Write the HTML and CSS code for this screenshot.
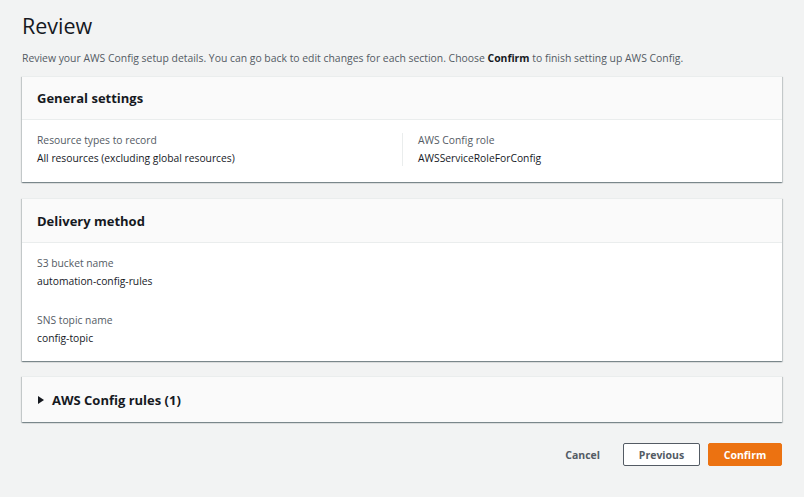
FILE: index.html
```html
<!DOCTYPE html>
<html>
<head>
<meta charset="utf-8">
<link rel="stylesheet" href="styles.css">
</head>
<body>
<div class="page">
  <h1 class="title">Review</h1>
  <p class="desc">Review your AWS Config setup details. You can go back to edit changes for each section. Choose <b>Confirm</b> to finish setting up AWS Config.</p>

  <section class="card">
    <div class="card-head"><h2>General settings</h2></div>
    <div class="card-body cols">
      <div class="col">
        <div class="label">Resource types to record</div>
        <div class="value">All resources (excluding global resources)</div>
      </div>
      <div class="col col-div">
        <div class="label">AWS Config role</div>
        <div class="value">AWSServiceRoleForConfig</div>
      </div>
    </div>
  </section>

  <section class="card card-delivery">
    <div class="card-head tall"><h2>Delivery method</h2></div>
    <div class="card-body stack">
      <div class="field">
        <div class="label">S3 bucket name</div>
        <div class="value">automation-config-rules</div>
      </div>
      <div class="field">
        <div class="label">SNS topic name</div>
        <div class="value">config-topic</div>
      </div>
    </div>
  </section>

  <section class="card card-rules">
    <div class="card-head collapsed"><span class="caret"></span><h2>AWS Config rules (1)</h2></div>
  </section>

  <div class="actions">
    <button class="btn-link">Cancel</button>
    <button class="btn btn-normal">Previous</button>
    <button class="btn btn-primary">Confirm</button>
  </div>
</div>
</body>
</html>
```
FILE: styles.css
```css
html, body {
  margin: 0;
  padding: 0;
  background: #f2f3f3;
}
body {
  font-family: "Open Sans", "Liberation Sans", sans-serif;
  color: #16191f;
}
.page {
  padding: 10px 22px 0 22px;
  width: 760px;
}
.title {
  margin: 0;
  font-size: 21.5px;
  font-weight: 400;
  line-height: 32px;
  color: #16191f;
}
.desc {
  margin: 8px 0 0 0;
  font-size: 10.4px;
  line-height: 16px;
  color: #545b64;
}
.desc b {
  color: #16191f;
  font-weight: 700;
}
.card {
  margin-top: 10px;
  background: #fff;
  box-shadow: 0 1px 1px 0 rgba(0,28,36,.3), 1px 1px 1px 0 rgba(0,28,36,.15), -1px 1px 1px 0 rgba(0,28,36,.15);
  border-top: 1px solid #eaeded;
}
.card-delivery {
  margin-top: 16px;
}
.card-rules {
  margin-top: 15px;
}
.card-head {
  background: #fafafa;
  height: 42px;
  display: flex;
  align-items: center;
  padding: 0 15px;
  border-bottom: 1px solid #eaeded;
}
.card-head.tall {
  height: 43px;
}
.card-head.collapsed {
  border-bottom: none;
  height: 45px;
}
.card-head h2 {
  margin: 0;
  font-size: 13px;
  font-weight: 700;
  color: #16191f;
}
.caret {
  width: 0;
  height: 0;
  border-top: 4px solid transparent;
  border-bottom: 4px solid transparent;
  border-left: 6px solid #16191f;
  margin-right: 8px;
  margin-left: 1px;
}
.card-body {
  padding: 13px 15px 16px 15px;
}
.cols {
  display: grid;
  grid-template-columns: 1fr 1fr;
  column-gap: 0;
}
.col-div {
  border-left: 1px solid #eaeded;
  padding-left: 15px;
}
.stack {
  display: flex;
  flex-direction: column;
  gap: 24px;
  padding-top: 13px;
  padding-bottom: 15px;
}
.label {
  font-size: 10.3px;
  line-height: 15px;
  color: #545b64;
}
.value {
  margin-top: 3px;
  font-size: 10.3px;
  line-height: 15px;
  color: #16191f;
}
.actions {
  display: flex;
  justify-content: flex-end;
  align-items: center;
  margin-top: 21px;
}
.btn-link {
  background: none;
  border: none;
  font-family: inherit;
  font-size: 10.5px;
  font-weight: 700;
  color: #545b64;
  padding: 0;
  margin-right: 23px;
}
.btn {
  font-family: inherit;
  font-size: 10.5px;
  font-weight: 700;
  height: 23px;
  padding: 0 10px;
  box-sizing: border-box;
  border-radius: 2px;
}
.btn-normal {
  background: #fff;
  color: #545b64;
  border: 1px solid #545b64;
  width: 77px;
  margin-right: 8px;
}
.btn-primary {
  background: #ec7211;
  color: #fff;
  border: 1px solid #ec7211;
  width: 74px;
}
```
